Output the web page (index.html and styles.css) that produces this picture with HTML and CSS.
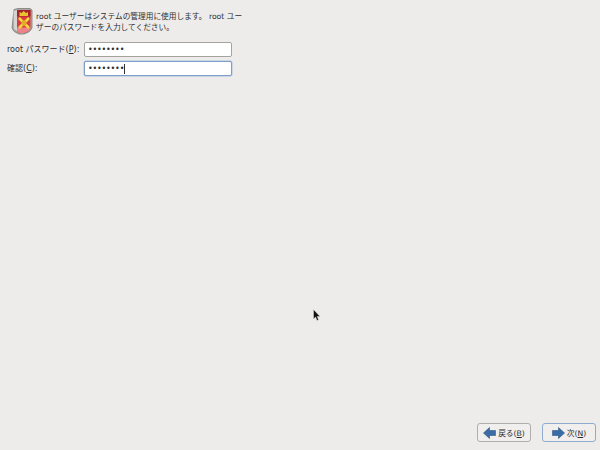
FILE: index.html
```html
<!DOCTYPE html>
<html lang="ja">
<head>
  <meta charset="UTF-8" />
  <title>root パスワード</title>
  <link rel="stylesheet" href="styles.css">
</head>
<body>
  <div class="screen">
    <div class="intro">
      <svg class="shield" width="22" height="27" viewBox="0 0 22 27">
        <path d="M3 1.500 L7 0.500 H19 L21 2 V20 Q20 24 13 26 H8 Q2 24 1 20 Z" fill="#a9a7a3" stroke="#807e79" stroke-width="0.800" />
        <path d="M2.500 3 L6 2 V23 L3 21 Z" fill="#d5d3cf" />
        <path d="M6 2 H19.500 V20 Q19 23 13 25 H9 Q6.500 24.500 6 23 Z" fill="#dc3a3e" />
        <path d="M6 2 H19.500 V8.500 H6 Z" fill="#a32528" />
        <path d="M8.500 4 L10.500 5 L12.700 3 L15 5 L17 4 V8 H8.500 Z" fill="#e8c32e" />
        <path d="M6 19.500 H19.500 V20 Q19 23 13 25 H9 Q6.500 24.500 6 23 Z" fill="#ef8286" />
        <path d="M8 10 L18 20 M18 10 L8 20" stroke="#f0d93f" stroke-width="2.600" />
        <path d="M11 12.500 H15 V17.500 H11 Z" fill="#e3ad28" />
      </svg>
      <p class="intro-text">root ユーザーはシステムの管理用に使用します。 root ユーザーのパスワードを入力してください。</p>
    </div>

    <div class="form">
      <label class="field-label" for="pw">root パスワード(<u>P</u>):</label>
      <div class="entry" id="pw"><span class="dots">••••••••</span></div>
      <label class="field-label" for="confirm">確認(<u>C</u>):</label>
      <div class="entry entry-focus" id="confirm"><span class="dots">••••••••</span><span class="caret"></span></div>
    </div>

    <div class="buttons">
      <button class="btn" type="button">
        <svg width="13" height="12" viewBox="0 0 13 12"><path d="M0.500 6 L6.500 0.500 V3.500 H12.500 V8.500 H6.500 V11.500 Z" fill="#3a6ca8" stroke="#2f5583" stroke-width="0.600" /></svg>
        <span>戻る(<u>B</u>)</span>
      </button>
      <button class="btn btn-default" type="button">
        <svg width="13" height="12" viewBox="0 0 13 12"><path d="M12.500 6 L6.500 0.500 V3.500 H0.500 V8.500 H6.500 V11.500 Z" fill="#3a6ca8" stroke="#2f5583" stroke-width="0.600" /></svg>
        <span>次(<u>N</u>)</span>
      </button>
    </div>

    <svg class="cursor" width="8" height="12" viewBox="0 0 8 12">
      <path d="M0.500 0.500 V10 L2.600 8 L4 11.500 L5.600 10.800 L4.200 7.500 H7 Z" fill="#111" stroke="#ddd" stroke-width="0.500" />
    </svg>
  </div>
</body>
</html>
```

FILE: styles.css
```css
html,
body {
  margin: 0;
  padding: 0;
}

body {
  font-family: 'DejaVu Sans', 'Noto Sans CJK JP', sans-serif;
  font-size: 7.7px;
  color: #2e2e2e;
  background-color: #edecea;
}

.screen {
  position: relative;
  width: 600px;
  height: 450px;
  box-sizing: border-box;
  padding: 8px 4px 8px 11px;
  display: flex;
  flex-direction: column;
}

.intro {
  display: flex;
  align-items: flex-start;
  gap: 3px;
}

.shield {
  flex: none;
}

.intro-text {
  margin: 3px 0 0;
  width: 208px;
  line-height: 11px;
}

.form {
  display: grid;
  grid-template-columns: 77px 148px;
  row-gap: 4px;
  align-items: center;
  margin-top: 7px;
  margin-left: -4px;
}

.field-label {
  white-space: nowrap;
  font-size: 8px;
  padding-bottom: 2px;
}

.entry {
  height: 13px;
  border: 1px solid #a5a39f;
  border-radius: 2px;
  background-color: #fff;
  display: flex;
  align-items: center;
  padding-left: 3px;
  font-family: 'DejaVu Sans', sans-serif;
}

.entry-focus {
  border-color: #7e9fc9;
  box-shadow: 0 0 0 0.5px #a9c1de;
}

.dots {
  font-size: 8px;
  letter-spacing: -0.2px;
}

.caret {
  width: 1px;
  height: 10px;
  background-color: #333;
}

.buttons {
  margin-top: auto;
  display: flex;
  justify-content: flex-end;
  gap: 11px;
}

.btn {
  width: 54px;
  height: 19px;
  padding: 0;
  border: 1px solid #b0aeaa;
  border-radius: 3px;
  background-color: #f0efed;
  color: #2e2e2e;
  font-family: inherit;
  font-size: 7.7px;
  display: flex;
  align-items: center;
  justify-content: center;
  gap: 2px;
}

.btn-default {
  border-color: #8faccf;
}

.cursor {
  position: absolute;
  left: 313px;
  top: 309px;
}
```
